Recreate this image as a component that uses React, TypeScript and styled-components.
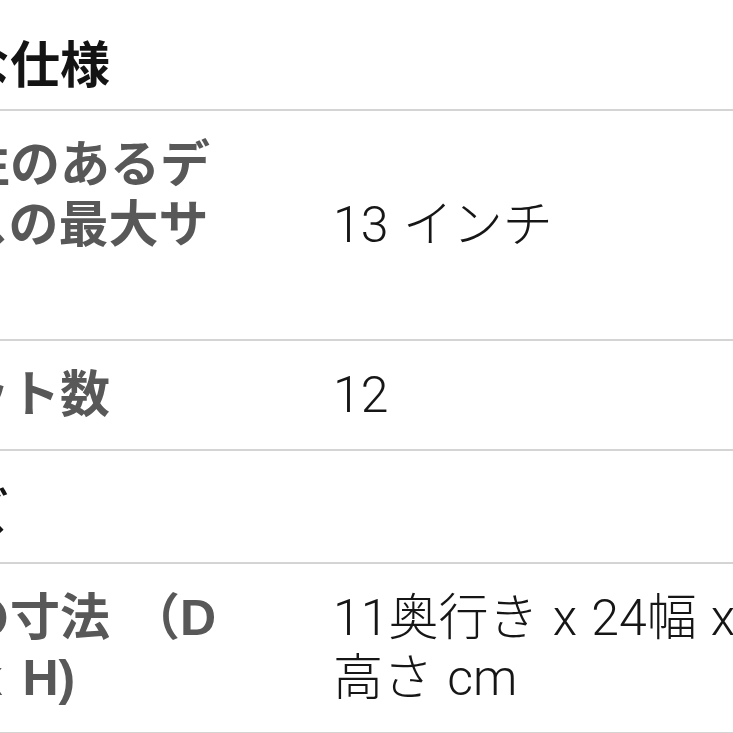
import React from 'react';
import styled, { createGlobalStyle } from 'styled-components';

interface SpecItem {
  label: string;
  value: string;
}

interface SpecSection {
  title: string;
  indent?: number;
  items: SpecItem[];
}

const sections: SpecSection[] = [
  {
    title: '主な仕様',
    indent: 50,
    items: [
      { label: '互換性のあるデバイスの最大サイズ', value: '13 インチ' },
      { label: 'ポケット数', value: '12' },
    ],
  },
  {
    title: 'サイズ',
    items: [
      {
        label: '製品の寸法 （D x W x H)',
        value: '11奥行き x 24幅 x 高さ cm',
      },
    ],
  },
];

const GlobalStyle = createGlobalStyle`
  html, body {
    margin: 0;
    padding: 0;
    background: #ffffff;
    overflow: hidden;
  }
`;

const Page = styled.div`
  width: 733px;
  height: 733px;
  overflow: hidden;
  background: #ffffff;
  font-family: 'Liberation Sans', 'Noto Sans CJK JP', sans-serif;
`;

// the sheet is wider than the view and starts left of it, as in the crop
const Sheet = styled.div`
  width: 903px;
  margin-left: -140px;
  border-bottom: 2px solid #d4d4d4;
`;

const SectionTitle = styled.div<{ $first?: boolean; $indent?: number }>`
  padding: ${p => (p.$first ? '36px 0 13px' : '33px 0 18px')};
  padding-left: ${p => p.$indent || 0}px;
  border-top: ${p => (p.$first ? 'none' : '2px solid #d4d4d4')};
  font-size: 50px;
  line-height: 60px;
  font-weight: 700;
  color: #141414;
`;

const SpecRow = styled.div`
  display: grid;
  grid-template-columns: 360px 1fr;
  column-gap: 113px;
  align-items: center;
  padding: 24px 0;
  border-top: 2px solid #d4d4d4;
  font-size: 50px;
  line-height: 60px;
`;

const Label = styled.div`
  font-weight: 700;
  word-spacing: 6px;
  color: #585858;
`;

const Value = styled.div`
  font-family: Roboto, 'Noto Sans CJK JP', sans-serif;
  font-weight: 300;
  word-spacing: 2px;
  color: #161616;
`;

const App: React.FC = () => {
  return (
    <Page>
      <GlobalStyle />
      <Sheet>
        {sections.map((section, i) => (
          <React.Fragment key={section.title}>
            <SectionTitle $first={i === 0} $indent={section.indent}>
              {section.title}
            </SectionTitle>
            {section.items.map(item => (
              <SpecRow key={item.label}>
                <Label>{item.label}</Label>
                <Value>{item.value}</Value>
              </SpecRow>
            ))}
          </React.Fragment>
        ))}
      </Sheet>
    </Page>
  );
};

export default App;
